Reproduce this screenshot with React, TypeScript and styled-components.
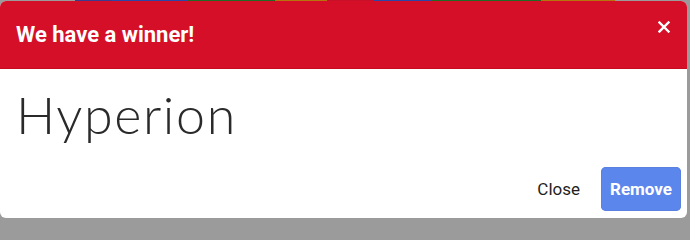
import React from "react";
import styled, { createGlobalStyle } from "styled-components";

const GlobalStyle = createGlobalStyle`
  html, body {
    margin: 0;
    padding: 0;
    background: #9b9b9b;
    font-family: Roboto, "Liberation Sans", sans-serif;
  }
`;

const Backdrop = styled.div`
  position: relative;
  width: 690px;
  height: 220px;
  overflow: hidden;
  background: #9b9b9b;
`;

const Strip = styled.div`
  display: flex;
  height: 2px;
`;

const Segment = styled.div<{ w: number; c: string }>`
  width: ${(p) => p.w}px;
  background: ${(p) => p.c};
`;

const Modal = styled.div`
  position: absolute;
  top: 1px;
  left: 0;
  width: 687px;
  height: 217px;
  background: #fff;
  border-radius: 6px;
  overflow: hidden;
  display: flex;
  flex-direction: column;
`;

const Header = styled.div`
  display: flex;
  justify-content: space-between;
  align-items: flex-start;
  height: 67px;
  padding: 0 16px;
  background: #d40f27;
  border-bottom: 1px solid #c70c22;
`;

const Title = styled.h5`
  margin: 0;
  padding-top: 21px;
  font-size: 22px;
  font-weight: 700;
  color: #fff;
  line-height: 26px;
`;

const CloseX = styled.button`
  margin: 19px 0 0;
  padding: 0;
  border: 0;
  background: none;
  width: 14px;
  height: 14px;
  display: flex;
  align-items: center;
  justify-content: center;
`;

const Body = styled.div`
  padding: 13px 16px 0;
`;

const Winner = styled.div`
  font-family: Lato, "Noto Sans", sans-serif;
  font-weight: 300;
  font-size: 52px;
  line-height: 64px;
  color: #2a2a2a;
  letter-spacing: 1.6px;
`;

const Footer = styled.div`
  margin-top: auto;
  display: flex;
  justify-content: flex-end;
  align-items: center;
  gap: 9px;
  padding: 0 6px 7px;
`;

const Button = styled.button<{ primary?: boolean }>`
  height: 44px;
  padding: 0 ${(p) => (p.primary ? 9 : 12)}px;
  border: 0;
  border-radius: 5px;
  font-family: Roboto, "Liberation Sans", sans-serif;
  font-size: 17px;
  font-weight: ${(p) => (p.primary ? 700 : 400)};
  color: ${(p) => (p.primary ? "#fff" : "#1e1e1e")};
  background: ${(p) => (p.primary ? "#5b86ec" : "transparent")};
  box-shadow: ${(p) => (p.primary ? "inset 0 0 0 1px #5a80e0" : "none")};
  min-width: ${(p) => (p.primary ? 80 : 0)}px;
`;

const segments: [number, string][] = [
  [75, "#9b9b9b"],
  [37, "#3b3c8e"],
  [76, "#2b47a8"],
  [87, "#1f6b25"],
  [52, "#b7740c"],
  [47, "#c8102b"],
  [58, "#2b47a8"],
  [109, "#1f6b25"],
  [74, "#b7740c"],
  [75, "#9b9b9b"],
];

export default function App() {
  return (
    <>
      <GlobalStyle />
      <Backdrop>
        <Strip>
          {segments.map(([w, c], i) => (
            <Segment key={i} w={w} c={c} />
          ))}
        </Strip>
        <Modal>
          <Header>
            <Title>We have a winner!</Title>
            <CloseX aria-label="Close">
              <svg width="12" height="12" viewBox="0 0 12 12">
                <path
                  d="M1.5 1.5 L10.5 10.5 M10.5 1.5 L1.5 10.5"
                  stroke="#fff"
                  strokeWidth="2.4"
                  strokeLinecap="square"
                />
              </svg>
            </CloseX>
          </Header>
          <Body>
            <Winner>Hyperion</Winner>
          </Body>
          <Footer>
            <Button>Close</Button>
            <Button primary>Remove</Button>
          </Footer>
        </Modal>
      </Backdrop>
    </>
  );
}
